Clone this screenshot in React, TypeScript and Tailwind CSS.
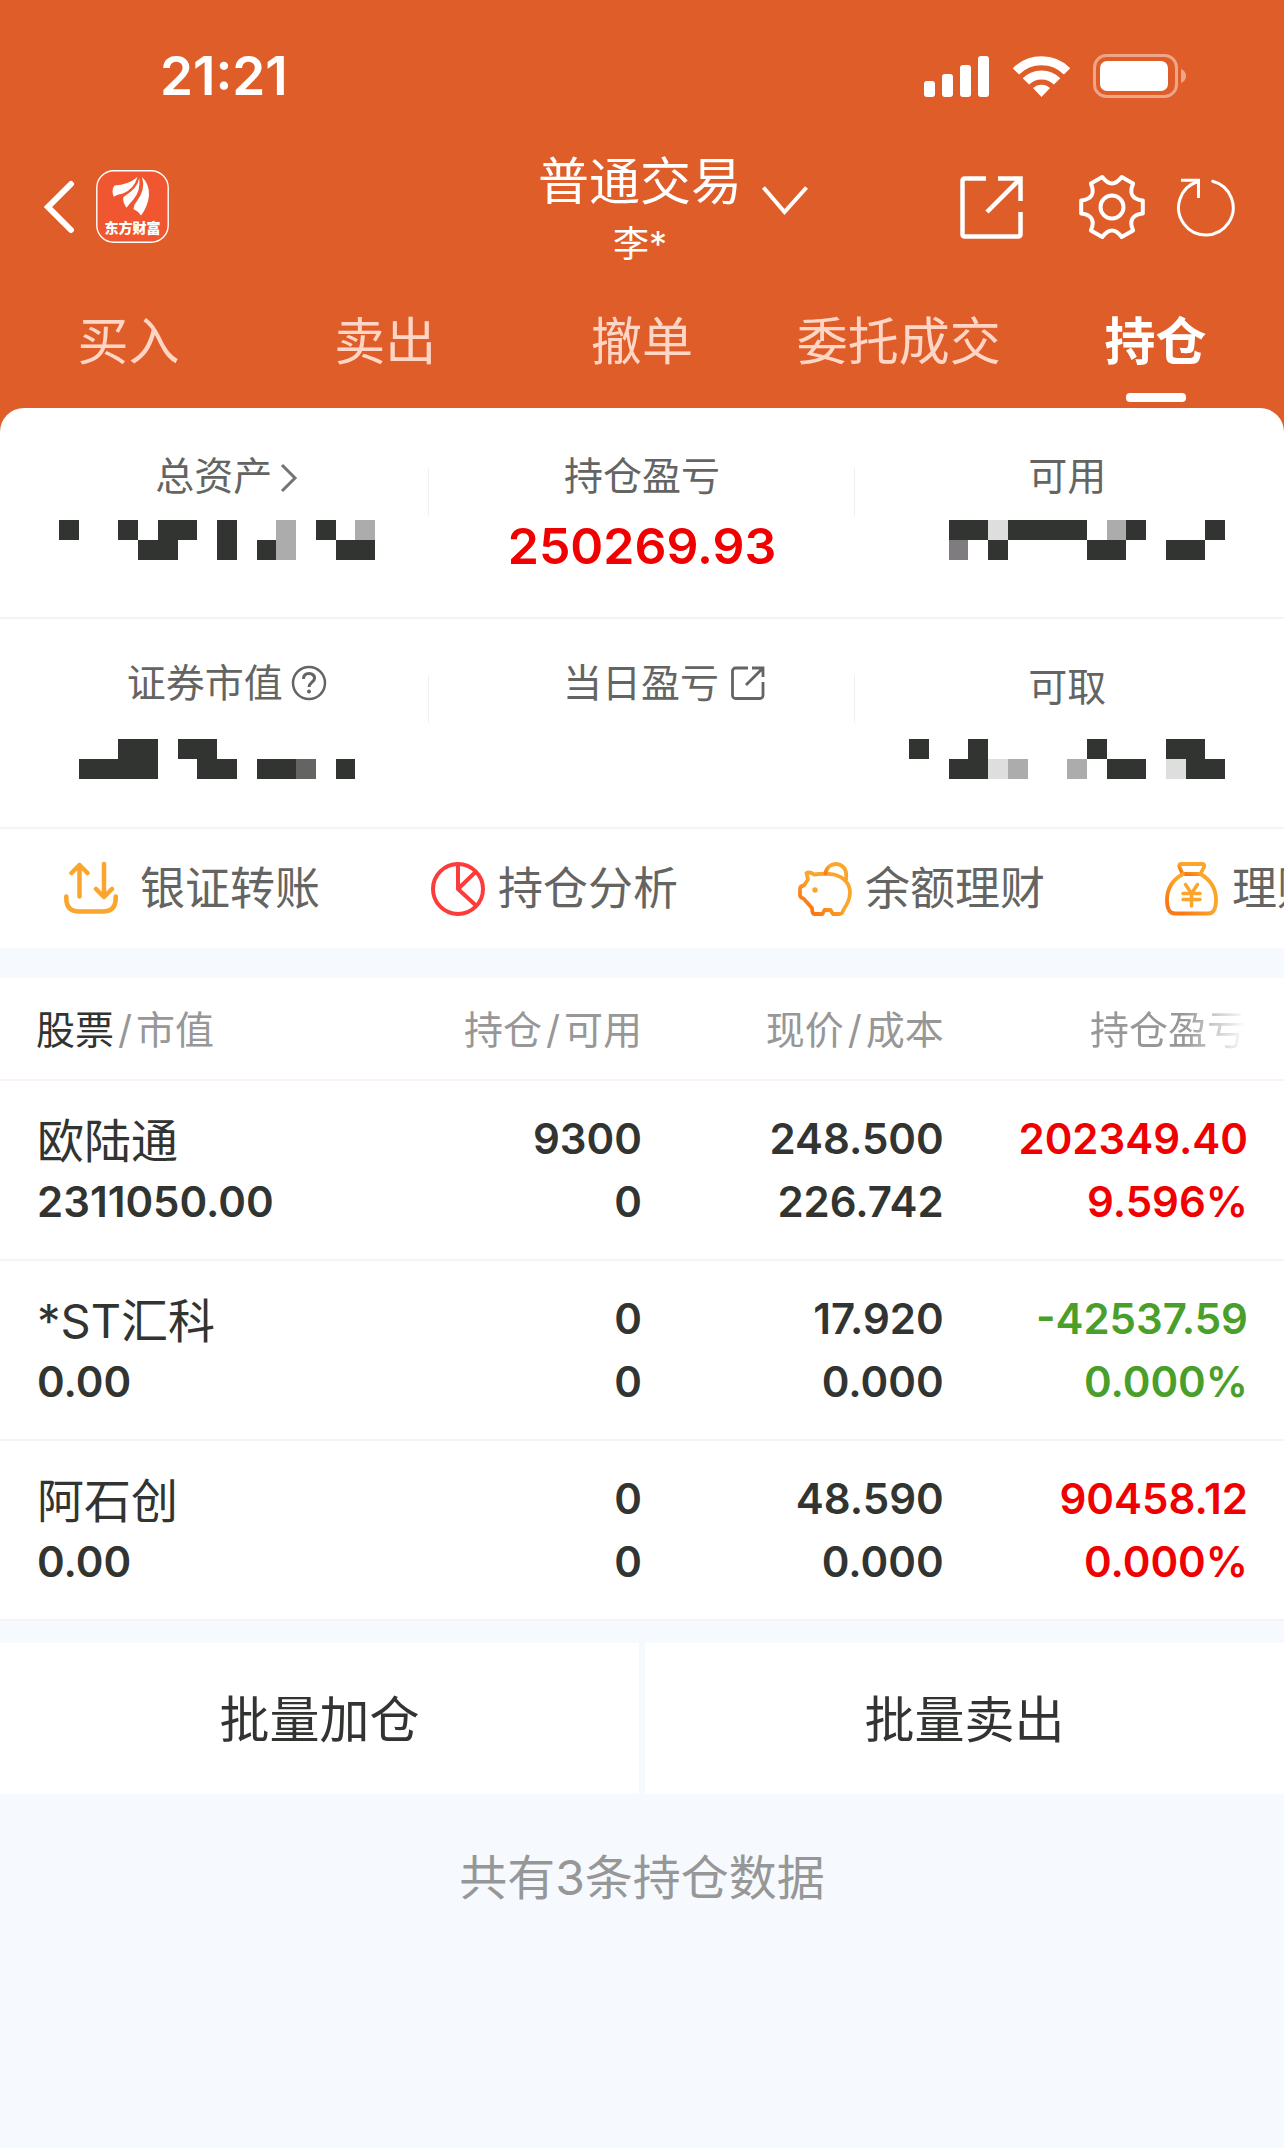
import type { ReactNode } from "react";

const tabs = ["买入", "卖出", "撤单", "委托成交", "持仓"];

const holdings = [
  {
    name: "欧陆通",
    value: "2311050.00",
    amount: "9300",
    usable: "0",
    price: "248.500",
    cost: "226.742",
    profit: "202349.40",
    rate: "9.596%",
    color: "text-[#f00000]",
  },
  {
    name: "*ST汇科",
    value: "0.00",
    amount: "0",
    usable: "0",
    price: "17.920",
    cost: "0.000",
    profit: "-42537.59",
    rate: "0.000%",
    color: "text-[#4a9f2a]",
  },
  {
    name: "阿石创",
    value: "0.00",
    amount: "0",
    usable: "0",
    price: "48.590",
    cost: "0.000",
    profit: "90458.12",
    rate: "0.000%",
    color: "text-[#f00000]",
  },
];

// One letter per block: d = dark, m = mid, g = grey, s = silver, l = light, . = empty
const blockColors: Record<string, string> = {
  d: "#323431",
  m: "#646563",
  g: "#7e7c7f",
  s: "#acacac",
  l: "#dedede",
};

function Mosaic({ rows, label }: { rows: string[]; label: string }) {
  return (
    <svg viewBox="0 0 320 40" preserveAspectRatio="none" className="h-10 w-[316px]" shapeRendering="crispEdges" role="img" aria-label={label}>
      {rows.map((row, y) =>
        row.split("").map((c, x) =>
          c === "." ? null : (
            <rect key={`${x}-${y}`} x={x * 20} y={y * 20} width="20" height="20" fill={blockColors[c]} />
          )
        )
      )}
    </svg>
  );
}

function StatusBar() {
  return (
    <div className="flex h-[152px] items-center justify-between pl-[160px] pr-[97px]">
      <span className="text-[53px] font-semibold leading-none">21:21</span>
      <div className="flex items-center gap-[23px]">
        <svg width="66" height="42" viewBox="0 0 66 42" fill="#fff">
          <rect x="0" y="26" width="11" height="16" rx="3" />
          <rect x="18" y="19" width="11" height="23" rx="3" />
          <rect x="36" y="10" width="11" height="32" rx="3" />
          <rect x="54" y="1" width="11" height="41" rx="3" />
        </svg>
        <svg width="57" height="42" viewBox="0 0 57 42" fill="none" stroke="#fff" strokeWidth="9">
          <path d="M2.9 16.4A36.2 36.2 0 0 1 54.1 16.4" />
          <path d="M12.9 26.4A22 22 0 0 1 44.1 26.4" />
          <path d="M28.5 42L20 33a12.5 12.5 0 0 1 17 0Z" fill="#fff" stroke="none" />
        </svg>
        <svg width="94" height="44" viewBox="0 0 94 44" fill="none">
          <rect x="1.5" y="1.5" width="82" height="41" rx="12" stroke="#fff" strokeOpacity=".45" strokeWidth="3" />
          <rect x="7" y="7" width="68" height="30" rx="7" fill="#fff" />
          <path d="M88 15q5 2 5 7t-5 7Z" fill="#fff" fillOpacity=".45" />
        </svg>
      </div>
    </div>
  );
}

function Logo() {
  return (
    <svg width="73" height="73" viewBox="0 0 73 73">
      <rect x=".8" y=".8" width="71.4" height="71.4" rx="17" fill="#f05731" stroke="#fff" strokeWidth="1.4" />
      <g fill="#fff">
        <path d="M41.5 7Q32 15 18.500 15.500Q15 20 17.800 26.800Q21 24.500 27 23.500Q38 19 41.500 7Z" />
        <path d="M43.200 8Q42 18 27.500 27Q26 31 30.500 37.700Q34 33 37 30Q45 21 43.200 8Z" />
        <path d="M46 7Q53.500 14 53 25.500Q52 36 45 45.600Q42 41 37.500 39Q37.500 35 41 31Q50 19 46 7Z" />
      </g>
      <text x="36.500" y="63" textAnchor="middle" fill="#fff" fontSize="14" fontWeight="900" fontFamily="Noto Sans CJK SC, sans-serif">
        东方财富
      </text>
    </svg>
  );
}

function NavBar() {
  return (
    <div className="grid h-[130px] grid-cols-[1fr_auto_1fr] items-start pl-11 pr-12">
      <div className="flex items-center gap-[21px] pt-[18px]">
        <button type="button" aria-label="返回">
          <svg width="31" height="54" viewBox="0 0 31 54" fill="none" stroke="#fff" strokeWidth="6" strokeLinecap="round">
            <path d="M27 4L4 27L27 50" />
          </svg>
        </button>
        <Logo />
      </div>
      <div className="flex flex-col items-center">
        <button type="button" className="flex items-start gap-5 pl-[66px] text-[51px] leading-[60px]">
          <h1>普通交易</h1>
          <svg width="46" height="30" viewBox="0 0 46 30" fill="none" stroke="#fff" strokeWidth="4" className="mt-[34px]">
            <path d="M1.500 1.500L22.500 26L44.500 1.500" />
          </svg>
        </button>
        <span className="text-4xl leading-[56px]">李*</span>
      </div>
      <div className="flex items-center justify-end pt-[22px]">
        <button type="button" aria-label="分享" className="mr-[54px]">
          <svg width="64" height="64" viewBox="0 0 64 64" fill="none" stroke="#fff" strokeWidth="4.500">
            <path d="M26 2.500H4.500a2 2 0 0 0-2 2v54a2 2 0 0 0 2 2h54a2 2 0 0 0 2-2V36" />
            <path d="M38 2.500H60.500V25M60.500 2.500L27 36" />
          </svg>
        </button>
        <button type="button" aria-label="设置" className="mr-[30px]">
          <svg width="68" height="68" viewBox="-34 -33 68 68" fill="none" stroke="#fff" strokeWidth="4" strokeLinejoin="round">
            <path d="M30.800-6.500V6.500Q14.700 8.500 21.100 23.400L9.700 30Q0 17-9.700 30L-21.100 23.400Q-14.700 8.500-30.800 6.500V-6.500Q-14.700-8.500-21.100-23.400L-9.700-30Q0-17 9.700-30L21.100-23.400Q14.700-8.500 30.800-6.500Z" />
            <circle r="11.500" />
          </svg>
        </button>
        <button type="button" aria-label="刷新">
          <svg width="60" height="60" viewBox="-30 -29 60 60" fill="none" stroke="#fff" strokeWidth="3">
            <path d="M6.700-25.800A27.300 27.300 0 1 1-8-25.500" strokeLinecap="round" />
            <path d="M-25-26.800H-7.500V-9" />
          </svg>
        </button>
      </div>
    </div>
  );
}

function Tabs() {
  return (
    <nav className="grid h-[126px] grid-cols-5">
      {tabs.map((tab) => {
        const active = tab === "持仓";
        return (
          <a
            key={tab}
            href="#"
            className={`flex flex-col items-center justify-between pb-[6px] pt-7 text-[51px] leading-[64px] ${
              active ? "font-bold text-white" : "text-[#ffd5c6]"
            }`}
          >
            {tab}
            {active && <span className="h-[9px] w-[60px] rounded bg-white" />}
          </a>
        );
      })}
    </nav>
  );
}

function Stat({
  label,
  icon,
  pad = "",
  divider = true,
  children,
}: {
  label: string;
  icon?: ReactNode;
  pad?: string;
  divider?: boolean;
  children?: ReactNode;
}) {
  return (
    <div className="relative flex flex-col items-center">
      <div className={`flex h-12 items-center text-[39px] leading-[44px] text-[#646563] ${pad}`}>
        {label}
        {icon}
      </div>
      {children}
      {divider && <span className="absolute right-0 top-4 h-12 w-px bg-[#f0f0f2]" />}
    </div>
  );
}

function Summary() {
  return (
    <section className="rounded-t-3xl bg-white">
      <div className="grid h-[211px] grid-cols-3 border-b-2 border-[#f4f4f5] px-1 pt-11">
        <Stat
          label="总资产"
          pad="pl-5"
          icon={
            <svg width="18" height="34" viewBox="0 0 18 34" fill="none" stroke="#747573" strokeWidth="3" className="ml-2 mt-1">
              <path d="M2 4L15 17L2 30" />
            </svg>
          }
        >
          <div className="mt-5">
            <Mosaic label="总资产" rows={["d..d.dd.d..s.d.s", "....dd..d.ds..dd"]} />
          </div>
        </Stat>
        <Stat label="持仓盈亏">
          <span className="mt-4 text-[50px] font-semibold leading-[60px] text-[#f00000]">250269.93</span>
        </Stat>
        <Stat label="可用" divider={false}>
          <div className="mt-5">
            <Mosaic label="可用" rows={["..ddldddd.sd...d", "..g.d....dd..dd."]} />
          </div>
        </Stat>
      </div>
      <div className="grid h-[210px] grid-cols-3 border-b-2 border-[#f4f4f5] px-1 pt-10">
        <Stat
          label="证券市值"
          pad="pl-5"
          icon={
            <svg width="36" height="36" viewBox="0 0 36 36" fill="none" stroke="#646563" strokeWidth="2.500" className="ml-2">
              <circle cx="18" cy="18" r="16" />
              <path d="M12.500 14Q12.500 8.500 18 8.500T23.500 13.500C23.500 17 18 17.500 18 22" strokeWidth="3" />
              <circle cx="18" cy="26.500" r="2" fill="#646563" stroke="none" />
            </svg>
          }
        >
          <div className="mt-8">
            <Mosaic label="证券市值" rows={["...dd.dd........", ".dddd..dd.ddm.d."]} />
          </div>
        </Stat>
        <Stat
          label="当日盈亏"
          pad="pl-11"
          icon={
            <svg width="34" height="34" viewBox="0 0 34 34" fill="none" stroke="#646563" strokeWidth="2.800" className="ml-3">
              <path d="M17 2H4.500A3 3 0 0 0 1.500 5V29.500A3 3 0 0 0 4.500 32.500H29A3 3 0 0 0 32 29.500V16" />
              <path d="M21 2H32V11M31.500 2.500L15 19" />
            </svg>
          }
        />
        <Stat label="可取" pad="pt-2" divider={false}>
          <div className="mt-8">
            <Mosaic label="可取" rows={["d..d.....d...dd.", "..ddls..s.dd.ldd"]} />
          </div>
        </Stat>
      </div>
    </section>
  );
}

function Shortcut({ label, wide, children }: { label: string; wide?: boolean; children: ReactNode }) {
  return (
    <a href="#" className={`flex w-[367px] shrink-0 items-center text-[45px] leading-none text-[#646563] ${wide ? "gap-[22px]" : "gap-[13px]"}`}>
      <svg width="54" height="54" viewBox="0 0 54 54" fill="none" strokeLinecap="round" strokeLinejoin="round">
        {children}
      </svg>
      <span className="whitespace-nowrap">{label}</span>
    </a>
  );
}

function Shortcuts() {
  return (
    <section className="flex h-[119px] items-center overflow-hidden bg-white pl-16">
      <Shortcut label="银证转账" wide>
        <g stroke="#faa52c" strokeWidth="4.500">
          <path d="M15.500 34.500V3M7.500 11L15.500 3L23.500 11" />
          <path d="M40 2V34M32 27L40 35L48 27" />
          <path d="M2.300 34.500V36Q2.300 49.500 15 49.500H39Q51.700 49.500 51.700 36V34.500" />
        </g>
      </Shortcut>
      <Shortcut label="持仓分析">
        <g stroke="#fb3c3a" strokeWidth="4">
          <circle cx="27" cy="27" r="25" />
          <path d="M27 2V27L44.500 10M27 27L45 43.500" />
        </g>
      </Shortcut>
      <Shortcut label="余额理财">
        <defs>
          <linearGradient id="orange" x1="0" y1="1" x2="1" y2="0">
            <stop offset="0.150" stopColor="#fb7814" />
            <stop offset="0.500" stopColor="#faa52c" />
          </linearGradient>
        </defs>
        <g stroke="url(#orange)" strokeWidth="3.800">
          <path d="M8.500 11Q12 9.500 16 12.500Q27 11 36 12.500Q52 17 52 31Q51.500 39 46.500 46L44 51Q43 52 41 52H35L32.500 48H26.500L24.500 52H16.500Q14 52 14 46L5.500 36.500Q2 35.500 2 33V27Q2 24 6 23.500L10 17.500Z" />
          <path d="M27.500 11.500C29-1 47-1.500 48.200 12V17" />
        </g>
        <circle cx="17" cy="28" r="2.700" fill="#faa52c" />
      </Shortcut>
      <Shortcut label="理财">
        <g stroke="url(#orange)" strokeWidth="3.800">
          <path d="M17.500 12L14.500 5Q13.500 2 16 2H37.500Q40 2 39 5L35.500 12Z" />
          <path d="M18 12Q2 21 2 38Q2 51.500 10 51.500H43Q51 51.500 51 38Q51 21 35.500 12" />
        </g>
        <path d="M20.500 22.500L26.500 31.500L32.500 22.500M26.500 31.500V44M18 31.500H35M18 37.500H35" stroke="#faa52c" strokeWidth="3.500" />
      </Shortcut>
    </section>
  );
}

function Holdings() {
  return (
    <table className="mt-[30px] w-full table-fixed border-collapse bg-white text-[#323431]">
      <colgroup>
        <col className="w-[30%]" />
        <col className="w-[20%]" />
        <col className="w-[23.5%]" />
        <col />
      </colgroup>
      <thead>
        <tr className="h-[102px] border-b-2 border-[#fbf3f3] text-right text-[39px] text-[#979797]">
          <th className="pl-9 pt-1 text-left font-normal">
            <span className="text-[#323431]">股票</span>
            <span className="mx-1">/</span>市值
          </th>
          <th className="pt-1 font-normal">
            持仓<span className="mx-1">/</span>可用
          </th>
          <th className="pt-1 font-normal">
            现价<span className="mx-1">/</span>成本
          </th>
          <th className="pr-[38px] pt-1 font-normal">
            <span className="bg-linear-to-r from-[#979797] from-60% to-white bg-clip-text text-transparent">持仓盈亏</span>
          </th>
        </tr>
      </thead>
      <tbody>
        {holdings.map((h) => (
          <tr key={h.name} className="h-[180px] border-b-2 border-[#f4f4f5] text-right text-[42px] font-semibold leading-[63px]">
            <td className="pl-[37px] text-left">
              <div className="pt-1 text-[47px] font-normal leading-[59px]">{h.name}</div>
              <div>{h.value}</div>
            </td>
            <td>
              <div>{h.amount}</div>
              <div>{h.usable}</div>
            </td>
            <td>
              <div>{h.price}</div>
              <div>{h.cost}</div>
            </td>
            <td className={`pr-9 ${h.color}`}>
              <div>{h.profit}</div>
              <div>{h.rate}</div>
            </td>
          </tr>
        ))}
      </tbody>
    </table>
  );
}

export default function App() {
  return (
    <main className="min-h-screen bg-[#f6faff] font-[Inter,'Noto_Sans_CJK_SC',sans-serif]">
      <div className="bg-[#df5d29]">
        <header className="text-white">
          <StatusBar />
          <NavBar />
          <Tabs />
        </header>
        <Summary />
      </div>
      <Shortcuts />
      <Holdings />
      <div className="mt-[22px] grid grid-cols-2 gap-[6px] text-[50px] text-[#323431]">
        <button type="button" className="h-[151px] bg-white pt-1">
          批量加仓
        </button>
        <button type="button" className="h-[151px] bg-white pt-1">
          批量卖出
        </button>
      </div>
      <p className="pt-[52px] text-center text-5xl leading-[64px] text-[#979797]">共有3条持仓数据</p>
    </main>
  );
}
